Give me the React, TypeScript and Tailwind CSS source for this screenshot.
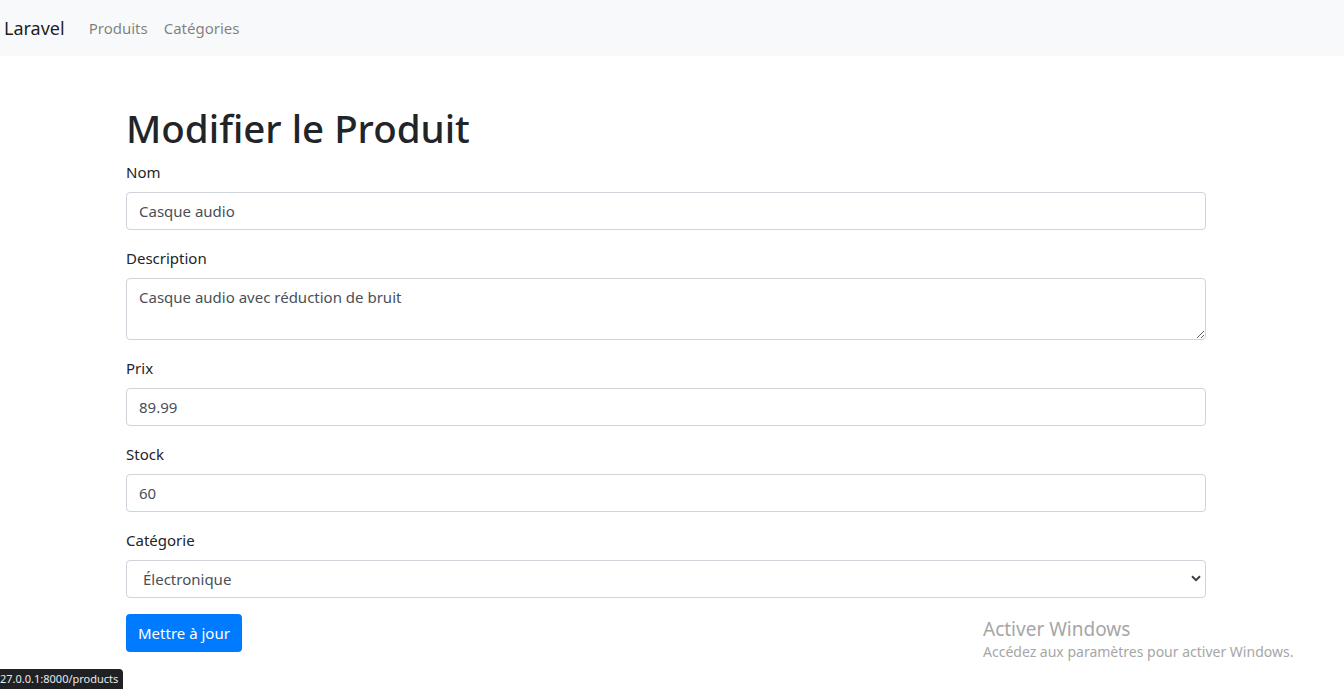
import React from "react";

const font = { fontFamily: '"Noto Sans", "Open Sans", sans-serif' };

function Field({ label, children }: { label: string; children: React.ReactNode }) {
  return (
    <div className="mb-4">
      <label className="mb-2 block text-[15px] leading-6 text-[#212529]">{label}</label>
      {children}
    </div>
  );
}

const inputCls =
  "block h-[38px] w-full rounded-[4px] border border-[#ced4da] bg-white px-3 py-1.5 text-[15px] leading-6 text-[#495057] outline-none";

export default function App() {
  return (
    <div className="relative h-[689px] w-[1344px] overflow-hidden bg-white" style={font}>
      <nav className="flex h-14 items-center bg-[#f8f9fa] pl-1">
        <span className="mr-6 text-[18px] leading-[30px] text-black/90">Laravel</span>
        <span className="mr-4 text-[15px] leading-6 text-black/50">Produits</span>
        <span className="text-[15px] leading-6 text-black/50">Catégories</span>
      </nav>
      <div className="ml-[126px] mt-12 w-[1080px]">
        <h1 className="mb-2 text-[38.5px] font-medium leading-[48px] text-[#212529]">Modifier le Produit</h1>
        <Field label="Nom">
          <input className={inputCls} defaultValue="Casque audio" />
        </Field>
        <Field label="Description">
          <textarea
            className="block h-[62px] w-full resize-y rounded-[4px] border border-[#ced4da] bg-white px-3 py-1.5 text-[15px] leading-6 text-[#495057] outline-none"
            rows={2}
            defaultValue="Casque audio avec réduction de bruit"
          />
        </Field>
        <Field label="Prix">
          <input className={inputCls} defaultValue="89.99" />
        </Field>
        <Field label="Stock">
          <input className={inputCls} defaultValue="60" />
        </Field>
        <Field label="Catégorie">
          <div className="relative">
            <select className="block h-[38px] w-full appearance-none rounded-[4px] border border-[#ced4da] bg-white pl-4 pr-8 text-[15px] leading-6 text-[#495057] outline-none">
              <option>Électronique</option>
            </select>
            <svg className="pointer-events-none absolute right-[5px] top-[15px]" width="10" height="7" viewBox="0 0 10 7">
              <path d="M1 1.2 L5 5.2 L9 1.2" fill="none" stroke="#3c4043" strokeWidth="2" />
            </svg>
          </div>
        </Field>
        <button className="h-[38px] rounded-[4px] bg-[#007bff] px-3 text-[15px] leading-6 text-white">Mettre à jour</button>
      </div>

      <div className="absolute left-[983px] top-[616px] text-[#a6a6a6]">
        <div className="text-[19px] leading-[26px]">Activer Windows</div>
        <div className="text-[14px] leading-[20px]">Accédez aux paramètres pour activer Windows.</div>
      </div>

      <div className="absolute bottom-0 left-0 flex h-5 items-center whitespace-nowrap rounded-tr-[4px] bg-[#202124] pr-[5px] text-[11px] text-[#e8eaed]">
        27.0.0.1:8000/products
      </div>
    </div>
  );
}
